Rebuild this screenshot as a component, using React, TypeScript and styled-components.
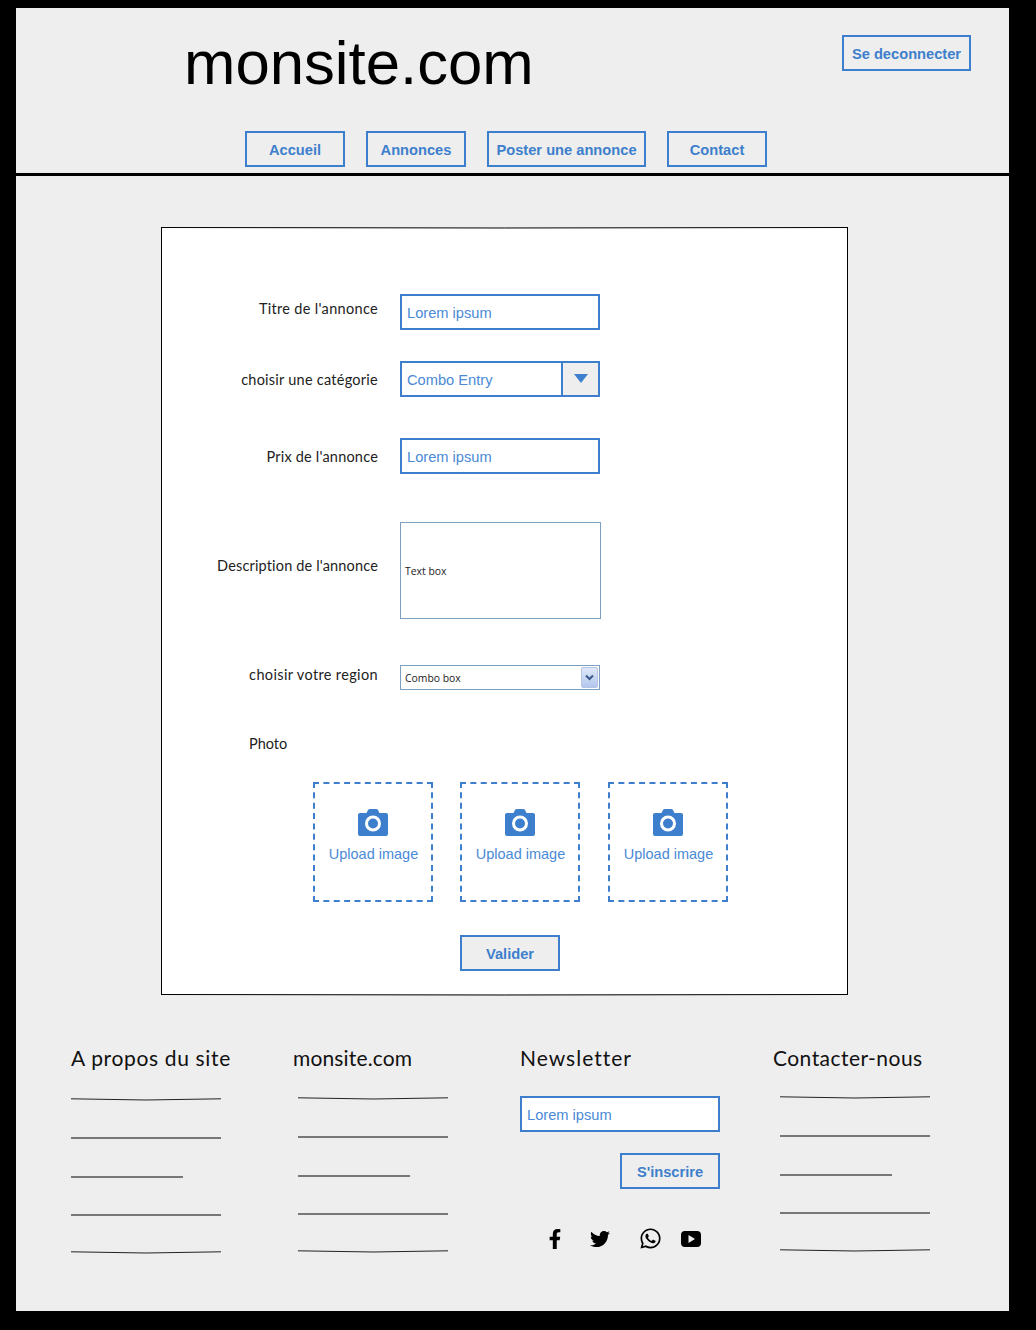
import React from 'react'
import styled, { createGlobalStyle } from 'styled-components'
import { FaFacebookF, FaTwitter, FaWhatsapp } from 'react-icons/fa'

const blue = '#3d7fcc'
const hand = '"Lato", "Open Sans", sans-serif'

const Global = createGlobalStyle`
  html, body {
    margin: 0;
    padding: 0;
    background: #000;
  }
  * {
    box-sizing: border-box;
  }
`

const Frame = styled.div`
  width: 993px;
  height: 1303px;
  margin: 8px 0 19px 16px;
  background: #eee;
  font-family: "Liberation Sans", Arial, sans-serif;
`

const Header = styled.header`
  height: 168px;
  border-bottom: 3px solid #000;
`

const TopRow = styled.div`
  display: flex;
  justify-content: space-between;
  align-items: flex-start;
  height: 123px;
  padding: 27px 38px 0 169px;
`

const Logo = styled.h1`
  margin: -1px 0 0 -1px;
  font-size: 61.7px;
  line-height: 58px;
  font-weight: 400;
  color: #000;
`

const Button = styled.button<{ $width: number }>`
  display: block;
  width: ${p => p.$width}px;
  height: 36px;
  padding: 2px 0 0;
  border: 2px solid ${blue};
  border-radius: 0;
  background: #eee;
  color: ${blue};
  font-family: "Liberation Sans", Arial, sans-serif;
  font-size: 14.67px;
  font-weight: 700;
  text-align: center;
`

const Nav = styled.nav`
  display: flex;
  gap: 21px;
  padding-left: 229px;
`

const Main = styled.main`
  padding: 51px 0 0 145px;
`

const Card = styled.form`
  position: relative;
  width: 687px;
  height: 768px;
  padding-top: 66px;
  border: 1px solid #000;
  border-top-color: transparent;
  border-bottom-color: transparent;
  background: #fff;
  background-clip: padding-box;
`

const CardEdge = styled.svg<{ $bottom?: boolean }>`
  position: absolute;
  left: -1px;
  ${p => (p.$bottom ? 'bottom: -3px;' : 'top: -1px;')}
  width: 687px;
  height: 3px;
`

const Row = styled.div<{ $top?: number }>`
  display: grid;
  grid-template-columns: 216px 200px;
  column-gap: 22px;
  align-items: center;
  margin-top: ${p => p.$top ?? 0}px;
`

const Label = styled.label<{ $shift?: number; $spacing?: number }>`
  display: block;
  font-family: ${hand};
  font-size: 14.5px;
  line-height: 20px;
  letter-spacing: ${p => p.$spacing ?? 0.2}px;
  color: #222;
  text-align: right;
  transform: translateY(${p => p.$shift ?? 0}px);
`

const TextInput = styled.div`
  height: 36px;
  padding: 0 5px;
  border: 2px solid ${blue};
  background: #fff;
  color: #4a8ad6;
  font-size: 14.67px;
  line-height: 34px;
`

const ComboEntry = styled.div`
  display: flex;
  height: 36px;
  border: 2px solid ${blue};
  background: #fff;
`

const ComboText = styled.div`
  flex: 1;
  padding: 0 5px;
  color: #4a8ad6;
  font-size: 14.67px;
  line-height: 34px;
`

const ComboArrow = styled.div`
  display: flex;
  align-items: flex-start;
  justify-content: center;
  width: 37px;
  padding-top: 11px;
  border-left: 2px solid ${blue};
  background: #eee;
  &::before {
    content: '';
    border-left: 7px solid transparent;
    border-right: 7px solid transparent;
    border-top: 9px solid ${blue};
  }
`

const TextBox = styled.div`
  display: flex;
  align-items: center;
  width: 201px;
  height: 97px;
  padding: 0 4px;
  border: 1px solid #7c9fc4;
  background: #fff;
  color: #222;
  font-family: "Open Sans", sans-serif;
  font-size: 10.4px;
`

const ComboBox = styled.div`
  display: flex;
  align-items: center;
  justify-content: space-between;
  height: 25px;
  padding: 1px 1px 1px 4px;
  border: 1px solid #7c9fc4;
  background: #fff;
  color: #222;
  font-family: "Open Sans", sans-serif;
  font-size: 10.4px;
`

const ComboButton = styled.div`
  display: flex;
  align-items: center;
  justify-content: center;
  width: 17px;
  height: 21px;
  border: 1px solid #b4c6e4;
  border-radius: 2px;
  background: linear-gradient(#dfe8f8, #b3c7ee);
`

const PhotoLabel = styled.div`
  margin: 44px 0 0 87px;
  font-family: ${hand};
  font-size: 14.5px;
  line-height: 20px;
  color: #222;
`

const Uploads = styled.div`
  display: flex;
  gap: 27px;
  margin: 28px 0 0 151px;
`

const Upload = styled.div`
  display: flex;
  flex-direction: column;
  align-items: center;
  width: 120px;
  height: 120px;
  padding-top: 25px;
  border: 2px dashed ${blue};
  color: #4a8ad6;
  font-size: 14.5px;
  line-height: 20px;
  &:last-child {
    margin-left: 1px;
  }
`

const UploadText = styled.span`
  margin: 8px 0 0 1px;
`

const SubmitRow = styled.div`
  margin: 33px 0 0 298px;
`

const Footer = styled.footer`
  display: grid;
  grid-template-columns: 222px 227px 253px 1fr;
  padding: 49px 0 0 55px;
`

const Column = styled.div``

const FooterTitle = styled.h2<{ $spacing: number }>`
  margin: 0;
  font-family: ${hand};
  font-size: 21px;
  font-weight: 400;
  line-height: 28px;
  letter-spacing: ${p => p.$spacing}px;
  color: #111;
  white-space: nowrap;
`

const Rules = styled.div<{ $left: number; $top: number }>`
  display: flex;
  flex-direction: column;
  margin: ${p => p.$top}px 0 0 ${p => p.$left}px;
  & > :nth-child(2) { margin-top: 37px; }
  & > :nth-child(3) { margin-top: 37px; }
  & > :nth-child(4) { margin-top: 36px; }
  & > :nth-child(5) { margin-top: 35px; }
`

const Rule = styled.div<{ $short?: boolean }>`
  width: ${p => (p.$short ? 112 : 150)}px;
  height: 2px;
  background: #777;
`

const CurvedRule = styled.svg`
  display: block;
  width: 150px;
  height: 3px;
  margin-bottom: -1px;
`

const NewsForm = styled.div`
  width: 200px;
  margin-top: 24px;
`

const NewsButton = styled.div`
  display: flex;
  justify-content: flex-end;
  margin-top: 21px;
`

const Socials = styled.div`
  display: flex;
  align-items: center;
  margin: 38px 0 0 25px;
  color: #000;
`

const Social = styled.span<{ $width: number; $size?: number }>`
  display: flex;
  width: ${p => p.$width}px;
  font-size: ${p => p.$size ?? 20}px;
`

function Curve() {
  return (
    <CurvedRule viewBox="0 0 150 3">
      <path d="M0 .8 Q75 3.2 150 .8" fill="none" stroke="#222" strokeWidth="1" />
    </CurvedRule>
  )
}

function RuleList({ left, top }: { left: number; top: number }) {
  return (
    <Rules $left={left} $top={top}>
      <Curve />
      <Rule />
      <Rule $short />
      <Rule />
      <Curve />
    </Rules>
  )
}

function Camera() {
  return (
    <svg width="30" height="27" viewBox="0 0 30 27">
      <path
        d="M2 4h6.5l1.5-3q.5-1 2-1h6q1.5 0 2 1l1.5 3H28q2 0 2 2v19q0 2-2 2H2q-2 0-2-2V6q0-2 2-2z"
        fill={blue}
      />
      <circle cx="15" cy="14.5" r="6.5" fill="none" stroke="#fff" strokeWidth="3" />
    </svg>
  )
}

function Youtube() {
  return (
    <svg width="20" height="20" viewBox="0 0 20 20">
      <path
        fillRule="evenodd"
        d="M4 2h12q4 0 4 4v8q0 4-4 4H4q-4 0-4-4V6q0-4 4-4zM7.5 6v8l6.5-4z"
        fill="#000"
      />
    </svg>
  )
}

export default function App() {
  return (
    <Frame>
      <Global />
      <Header>
        <TopRow>
          <Logo>monsite.com</Logo>
          <Button type="button" $width={129}>Se deconnecter</Button>
        </TopRow>
        <Nav>
          <Button type="button" $width={100}>Accueil</Button>
          <Button type="button" $width={100}>Annonces</Button>
          <Button type="button" $width={159}>Poster une annonce</Button>
          <Button type="button" $width={100}>Contact</Button>
        </Nav>
      </Header>
      <Main>
        <Card>
          <CardEdge viewBox="0 0 687 3">
            <path d="M0 .5 Q343 1.5 687 .5" fill="none" stroke="#000" strokeWidth="1" />
          </CardEdge>
          <CardEdge $bottom viewBox="0 0 687 3">
            <path d="M0 .5 Q343 1.5 687 .5" fill="none" stroke="#000" strokeWidth="1" />
          </CardEdge>
          <Row>
            <Label $shift={-3} $spacing={0.32}>Titre de l'annonce</Label>
            <TextInput>Lorem ipsum</TextInput>
          </Row>
          <Row $top={31}>
            <Label $shift={1} $spacing={0.25}>choisir une catégorie</Label>
            <ComboEntry>
              <ComboText>Combo Entry</ComboText>
              <ComboArrow />
            </ComboEntry>
          </Row>
          <Row $top={41}>
            <Label $shift={1}>Prix de l'annonce</Label>
            <TextInput>Lorem ipsum</TextInput>
          </Row>
          <Row $top={48}>
            <Label $shift={-5} $spacing={0.16}>Description de l'annonce</Label>
            <TextBox>Text box</TextBox>
          </Row>
          <Row $top={46}>
            <Label $shift={-3} $spacing={0.36}>choisir votre region</Label>
            <ComboBox>
              Combo box
              <ComboButton>
                <svg width="9" height="7" viewBox="0 0 9 7">
                  <path d="M1 1.5l3.5 3.5L8 1.5" fill="none" stroke="#3b5a8c" strokeWidth="2" />
                </svg>
              </ComboButton>
            </ComboBox>
          </Row>
          <PhotoLabel>Photo</PhotoLabel>
          <Uploads>
            {[0, 1, 2].map(i => (
              <Upload key={i}>
                <Camera />
                <UploadText>Upload image</UploadText>
              </Upload>
            ))}
          </Uploads>
          <SubmitRow>
            <Button type="button" $width={100}>Valider</Button>
          </SubmitRow>
        </Card>
      </Main>
      <Footer>
        <Column>
          <FooterTitle $spacing={0.65}>A propos du site</FooterTitle>
          <RuleList left={0} top={26} />
        </Column>
        <Column>
          <FooterTitle $spacing={0.15}>monsite.com</FooterTitle>
          <RuleList left={5} top={25} />
        </Column>
        <Column>
          <FooterTitle $spacing={1}>Newsletter</FooterTitle>
          <NewsForm>
            <TextInput>Lorem ipsum</TextInput>
            <NewsButton>
              <Button type="button" $width={100}>S'inscrire</Button>
            </NewsButton>
          </NewsForm>
          <Socials>
            <Social $width={45}><FaFacebookF /></Social>
            <Social $width={49}><FaTwitter /></Social>
            <Social $width={42} $size={23}><FaWhatsapp /></Social>
            <Social $width={20}><Youtube /></Social>
          </Socials>
        </Column>
        <Column>
          <FooterTitle $spacing={0.45}>Contacter-nous</FooterTitle>
          <RuleList left={7} top={24} />
        </Column>
      </Footer>
    </Frame>
  )
}
